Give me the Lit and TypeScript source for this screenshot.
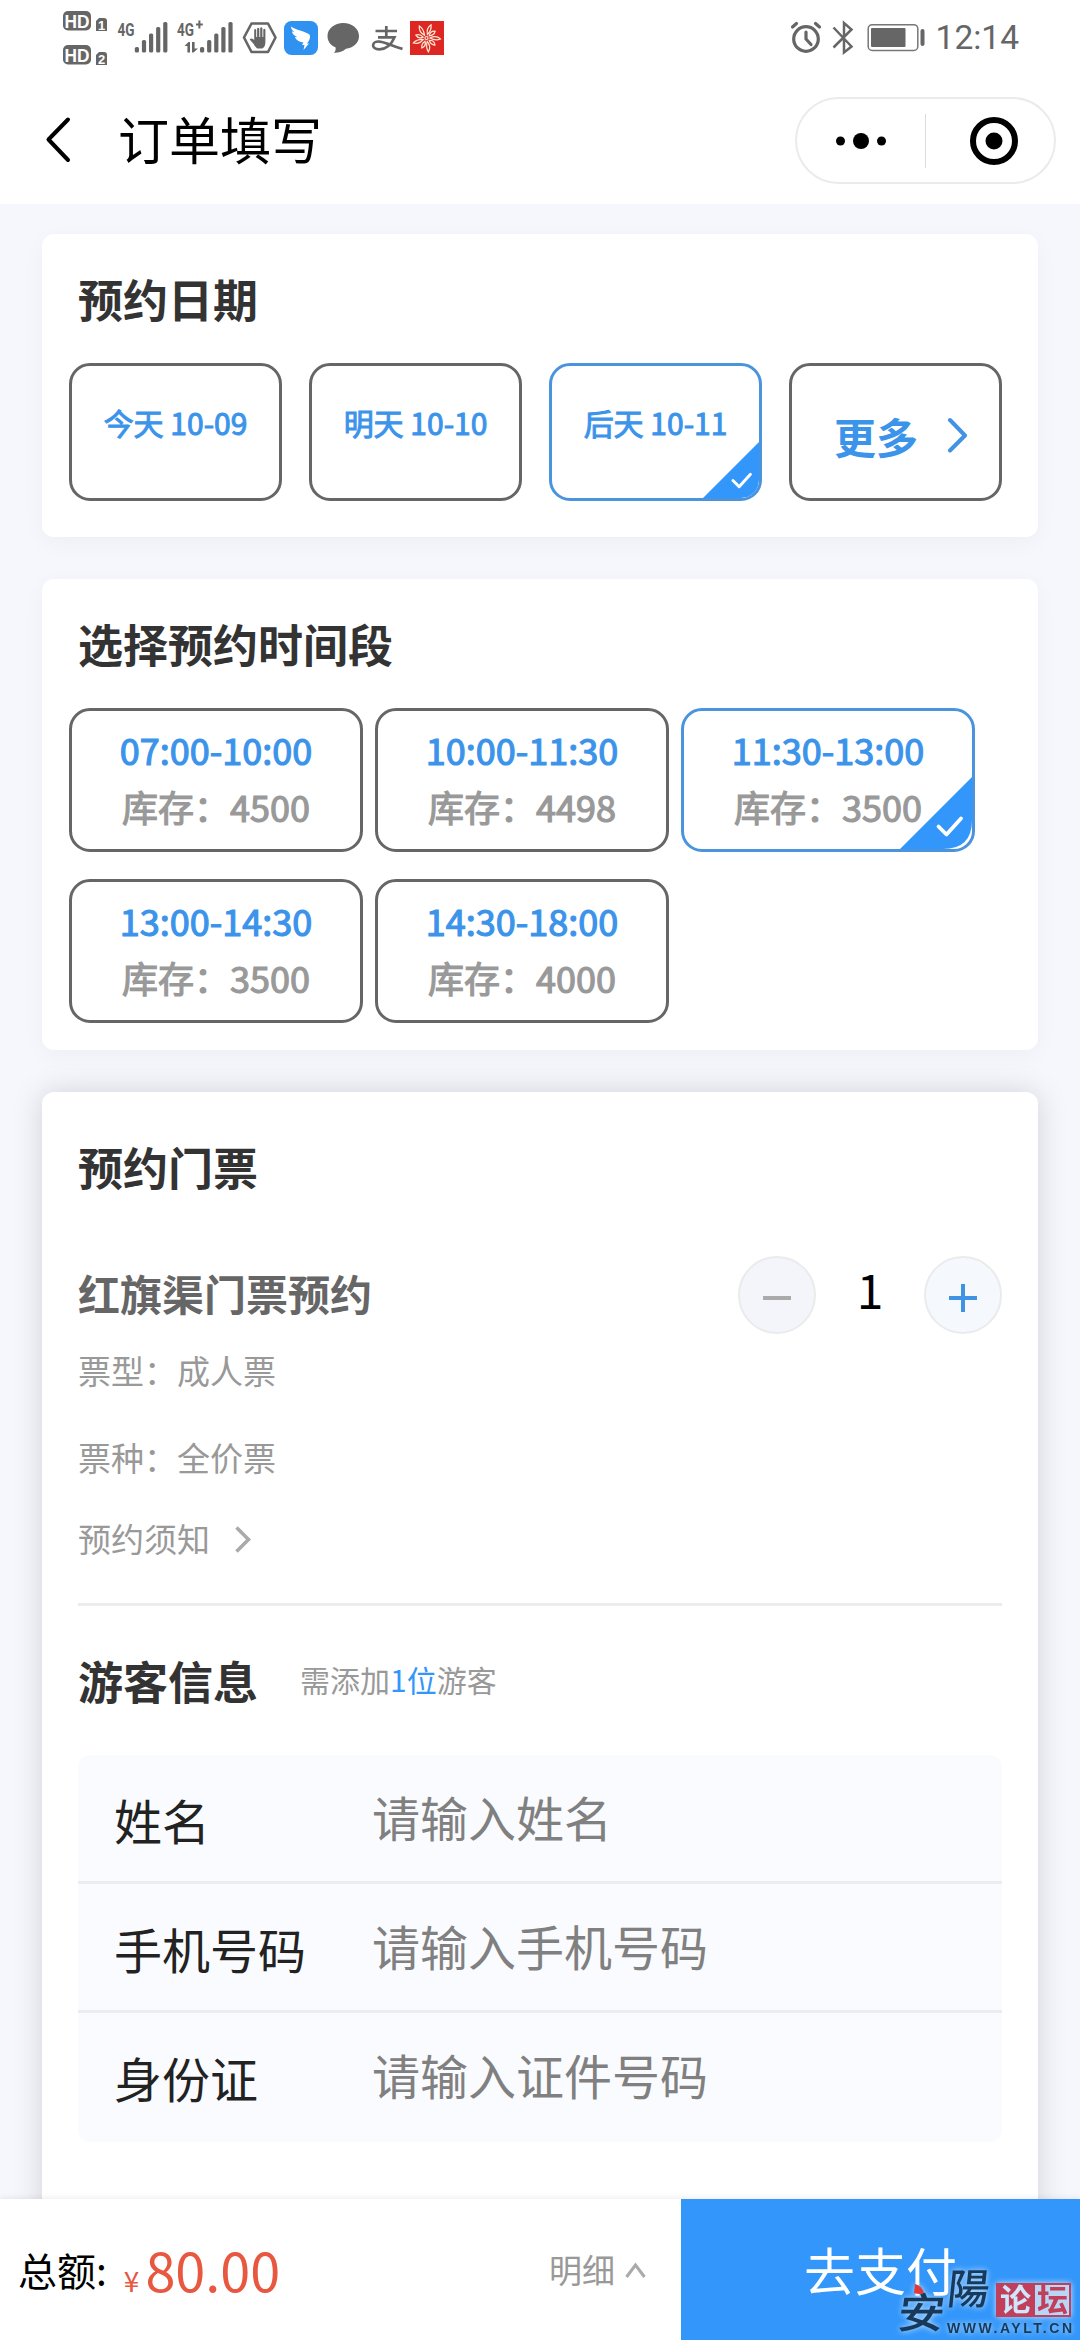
import { LitElement, html, css, svg } from "lit";
import { customElement, property, state } from "lit/decorators.js";
import { classMap } from "lit/directives/class-map.js";

interface Slot {
  time: string;
  stock: number;
}

const DAYS = ["今天 10-09", "明天 10-10", "后天 10-11"];

const SLOTS: Slot[] = [
  { time: "07:00-10:00", stock: 4500 },
  { time: "10:00-11:30", stock: 4498 },
  { time: "11:30-13:00", stock: 3500 },
  { time: "13:00-14:30", stock: 3500 },
  { time: "14:30-18:00", stock: 4000 },
];

const FIELDS = [
  { label: "姓名", hint: "请输入姓名" },
  { label: "手机号码", hint: "请输入手机号码" },
  { label: "身份证", hint: "请输入证件号码" },
];

const bars = (x: number) =>
  [47, 40, 33.5, 27, 22].map(
    (y, i) => svg`<rect x=${x + i * 7.1} y=${y} width="4.2" height=${52.5 - y} rx="1.6" />`
  );

@customElement("status-bar")
export class StatusBar extends LitElement {
  static styles = css`
    :host {
      display: flex;
      align-items: flex-start;
      height: 76px;
      padding: 0 61px 0 60px;
    }
    svg {
      display: block;
      flex: none;
      fill: #666;
    }
    .hd {
      font: 700 19px "Liberation Sans", sans-serif;
      fill: #fff;
    }
    .sim {
      font: 700 13px "Liberation Sans", sans-serif;
      fill: #fff;
    }
    .net {
      font: 700 18px "Roboto", sans-serif;
    }
    .spacer {
      flex: 1;
    }
    .clock {
      font: 400 33.500px/76px "Roboto", sans-serif;
      color: #666;
      margin-left: 10px;
    }
  `;

  render() {
    return html`
      <svg width="177" height="76" viewBox="60 0 177 76">
        <rect x="63" y="11" width="28" height="19.500" rx="5" />
        <text class="hd" x="64.500" y="27.500" textLength="25" lengthAdjust="spacingAndGlyphs">HD</text>
        <path d="M96 21l3-3h5q3 0 3 3v10H96z" />
        <text class="sim" x="98" y="29.500">1</text>
        <rect x="63" y="45" width="28" height="19.500" rx="5" />
        <text class="hd" x="64.500" y="61.500" textLength="25" lengthAdjust="spacingAndGlyphs">HD</text>
        <path d="M96 55l3-3h5q3 0 3 3v10H96z" />
        <text class="sim" x="98" y="63.500">2</text>
        <text class="net" x="117.500" y="35.500" textLength="17" lengthAdjust="spacingAndGlyphs">4G</text>
        ${bars(134.8)}
        <text class="net" x="177" y="35.500" textLength="17" lengthAdjust="spacingAndGlyphs">4G</text>
        <path d="M196 23.500h2.400v-3h2v3h2.400v2h-2.400v3h-2v-3H196z" />
        <path d="M184.500 46l4-4h1.500v10.500h-2.600V46zM192 42h2.600v6.500h3.400l-4.500 4H192z" />
        ${bars(200)}
      </svg>
      <svg width="44" height="76" viewBox="237 0 44 76">
        <path d="M251.500 23.500h16.500l7.500 14-7.500 14.500h-16.500l-7.500-14.500z" fill="none" stroke="#666" stroke-width="2.600" stroke-linejoin="round" />
        <path d="M254.200 29.500q1.200-1 2 0V37h.9v-8.500q1.100-1.500 2.200 0V37h.9v-9q1.200-1.400 2.200 0v9h.9v-7.500q1.100-1.300 2.100 0V42q0 5-3.200 6.500h-5q-2-1.500-3.500-4.500l-4-4.500q1.500-1.800 3.600-.3l.9.800z" />
      </svg>
      <svg width="42" height="76" viewBox="281 0 42 76">
        <rect x="284" y="21" width="34" height="34" rx="7.500" fill="#2f91f0" />
        <path fill="#fff" d="M291 26.500c5 3.500 13 4.500 18.500 8 1.500 3-.5 6.500-2.500 9h2l-5.500 6.500 1-5h-2.500l1.500-2.500c-4.500-.5-8-3-8.500-5.500l2.500.3c-3.500-1.600-5.500-3.500-5.500-6l2.300.9c-2-1.700-3.400-3.700-3.300-5.700z" />
      </svg>
      <svg width="42" height="76" viewBox="323 0 42 76">
        <path d="M343.300 23c8.800 0 15.700 5.600 15.700 13s-6 11.800-13 12.800c-3 2.600-7.500 4.200-12 4 1.500-1.500 2-3.500 1.500-5.500-5-2-8-6-8-11.300 0-7.400 7-13 15.800-13z" />
      </svg>
      <svg width="42" height="76" viewBox="365 0 42 76">
        <path d="M375.500 31h21.500M386.300 26v11M378 37.300h16.500c-3 7-8.500 12-15 12-9.500 0-7.500-8.500 0-7.700 7 .7 14 5 23 7.300" fill="none" stroke="#666" stroke-width="2.700" />
      </svg>
      <svg width="40" height="76" viewBox="407 0 40 76">
        <rect x="410" y="21" width="34" height="34" fill="#dd2722" />
        <g fill="none" stroke="#ffe9d6" stroke-width="1.200">
          ${[15, 52, 90, 130, 168, 205, 245, 285, 325].map(
            (a, i) => svg`<path d=${i % 2 ? "M426.500 34.500q-3.500-4 0-7.500 2.500 3.500 0 7.500z" : "M426.500 34.500q-3-6 1-10.500 2 5-1 10.500z"} transform=${`rotate(${a} 426.500 38)`} />`
          )}
          <circle cx="426.500" cy="38" r="1.500" />
        </g>
      </svg>
      <span class="spacer"></span>
      <svg width="36" height="76" viewBox="790 0 36 76">
        <g fill="none" stroke="#666" stroke-width="3.200" stroke-linecap="round">
          <circle cx="806" cy="39" r="12.300" />
          <path d="M806 32v7l5 5.500M792.500 27l4-3.500M819.500 27l-4-3.500" />
        </g>
      </svg>
      <svg width="36" height="76" viewBox="826 0 36 76">
        <path d="M833.500 27.500L851.500 46.500 844 52.500V23l7.500 6.500L833.500 47.500" fill="none" stroke="#666" stroke-width="2.500" />
      </svg>
      <svg width="64" height="76" viewBox="862 0 64 76">
        <rect x="868.200" y="24.700" width="49.600" height="25.800" rx="4" fill="none" stroke="#777" stroke-width="1.500" />
        <rect x="871" y="28" width="34.500" height="19" rx="1" />
        <rect x="920.500" y="29" width="4" height="17" rx="2" />
      </svg>
      <span class="clock">12:14</span>
    `;
  }
}

@customElement("choice-mark")
export class ChoiceMark extends LitElement {
  @property({ type: Number }) size = 60;
  @property({ type: Number }) corner = 23;

  static styles = css`
    :host {
      position: absolute;
      right: 0;
      bottom: 0;
      line-height: 0;
    }
    svg {
      display: block;
    }
  `;

  render() {
    const k = 72 - this.corner;
    return html`
      <svg width=${this.size} height=${this.size} viewBox="0 0 72 72">
        <path d=${`M72 0V${k}Q72 72 ${k} 72H0z`} fill="#3296fa" />
        <path d="M38.500 49.500l8 8 14.500-16" fill="none" stroke="#fff" stroke-width="3.800" stroke-linecap="round" stroke-linejoin="round" />
      </svg>
    `;
  }
}

@customElement("app-root")
export class AppRoot extends LitElement {
  @state() private day = 2;
  @state() private slotIndex = 2;

  static styles = css`
    :host {
      display: flex;
      flex-direction: column;
      position: relative;
      width: 1080px;
      height: 2340px;
      overflow: hidden;
      background: #f6f7fc;
      font-family: "Noto Sans CJK SC", sans-serif;
      color: #000;
    }
    * {
      box-sizing: border-box;
    }
    svg {
      display: block;
      flex: none;
    }
    .top {
      flex: none;
      height: 204px;
      background: #fff;
    }
    .nav {
      display: flex;
      align-items: flex-start;
      height: 128px;
      padding: 0 24px 0 40px;
    }
    .nav-title {
      flex: 1;
      margin: 0 0 0 38px;
      font-size: 51px;
      font-weight: 400;
      line-height: 124px;
    }
    .capsule {
      display: flex;
      align-items: center;
      width: 261px;
      height: 87px;
      margin-top: 21px;
      border: 2px solid #ebebeb;
      border-radius: 44px;
    }
    .capsule .part {
      display: flex;
      flex: none;
      width: 128px;
      justify-content: center;
    }
    .capsule .part.close {
      padding-left: 8px;
    }
    .capsule .rule {
      width: 1px;
      height: 54px;
      background: #dcdcdc;
    }
    .content {
      flex: 1;
      min-height: 0;
      display: flex;
      flex-direction: column;
      gap: 42px;
      padding: 30px 42px 0;
      overflow: hidden;
    }
    .card {
      flex: none;
      padding: 0 27px 36px;
      border-radius: 12px;
      background: #fff;
      box-shadow: 0 6px 24px rgba(0, 0, 0, 0.035);
    }
    .card.slots {
      padding-bottom: 27px;
    }
    .card.ticket {
      height: 1200px;
      padding: 0 36px;
      box-shadow: 0 0 30px rgba(0, 0, 0, 0.15);
    }
    .title {
      margin: 0;
      padding-left: 9px;
      font-size: 45px;
      font-weight: 700;
      line-height: 129px;
      color: #333;
    }
    .ticket .title {
      padding-left: 0;
      line-height: 149px;
    }
    .row {
      display: flex;
      gap: 27px;
    }
    .grid {
      display: grid;
      grid-template-columns: repeat(3, 294px);
      gap: 27px 12px;
    }
    .choice {
      position: relative;
      display: flex;
      flex-direction: column;
      align-items: center;
      height: 144px;
      padding-top: 10px;
      overflow: hidden;
      border: 3px solid #666;
      border-radius: 21px;
      font-size: 36px;
      line-height: 57px;
      color: #3c94ea;
      white-space: nowrap;
      -webkit-text-stroke: 1.2px currentColor;
    }
    .choice.day {
      width: 213px;
      height: 138px;
      padding-top: 0;
      font-size: 30px;
      line-height: 113px;
      -webkit-text-stroke-width: 1px;
    }
    .choice.on {
      border-color: #4a94dd;
    }
    .choice.more {
      flex-direction: row;
      align-items: center;
      justify-content: center;
      gap: 29px;
      padding: 6px 0 0 11px;
      font-size: 42px;
      font-weight: 700;
      line-height: 121px;
      -webkit-text-stroke-width: 0;
    }
    .stock {
      color: #999;
    }
    .buy {
      display: flex;
      align-items: flex-start;
      padding-top: 15px;
    }
    .name {
      flex: 1;
      font-size: 42px;
      font-weight: 700;
      line-height: 74px;
      color: #666;
    }
    .step {
      display: flex;
      align-items: center;
      justify-content: center;
      width: 78px;
      height: 78px;
      padding-top: 6px;
      border: 2px solid #eaebec;
      border-radius: 50%;
      background: #f4f5fa;
    }
    .step.plus {
      background: #f5f9fe;
    }
    .count {
      width: 108px;
      font-size: 48px;
      line-height: 65px;
      text-align: center;
    }
    .meta {
      font-size: 33px;
      line-height: 72px;
      color: #999;
    }
    .meta.kind {
      line-height: 103px;
    }
    .meta.notice {
      display: flex;
      align-items: center;
      gap: 24px;
      line-height: 58px;
    }
    .divider {
      height: 3px;
      margin-top: 36px;
      background: #ededed;
    }
    .guests {
      display: flex;
      align-items: flex-start;
      gap: 42px;
    }
    .guests .title {
      line-height: 149px;
    }
    .need {
      font-size: 30px;
      line-height: 147px;
      color: #999;
    }
    .need b {
      font-weight: 400;
      color: #3296fa;
    }
    .form {
      border-radius: 12px;
      background: #fafbfe;
    }
    .field {
      display: flex;
      align-items: flex-start;
      height: 129px;
      padding-left: 36px;
      border-bottom: 3px solid #ecedef;
      font-size: 48px;
      line-height: 128px;
      color: #222;
    }
    .field:last-child {
      border-bottom: 0;
    }
    .label {
      width: 258px;
    }
    .hint {
      line-height: 123px;
      color: #808080;
    }
    .footer {
      position: relative;
      display: flex;
      flex: none;
      align-items: center;
      height: 141px;
      padding-left: 18px;
      background: #fff;
      box-shadow: 0 -1px 6px rgba(0, 0, 0, 0.08);
      line-height: 141px;
    }
    .sum {
      font-size: 39px;
    }
    .price {
      display: flex;
      flex: 1;
      align-items: baseline;
      gap: 6px;
      height: 141px;
      margin-left: 17px;
      font-size: 54px;
      line-height: 136px;
      color: #e8573f;
    }
    .price .amount {
      line-height: 140px;
    }
    .price small {
      font-size: 28px;
    }
    .detail {
      display: flex;
      align-items: center;
      gap: 10px;
      margin-right: 35px;
      font-size: 33px;
      color: #999;
    }
    .pay {
      width: 399px;
      background: #3296fa;
      font-size: 51px;
      text-align: center;
      color: #fff;
    }
    .stamp {
      position: absolute;
      right: 0;
      bottom: 0;
      filter: drop-shadow(0 0 3px rgba(220, 240, 255, 0.9));
    }
    .brush {
      font-family: "Noto Sans CJK TC", sans-serif;
      font-weight: 500;
      fill: #173a5c;
    }
    .site {
      font: 700 14px "Liberation Sans", sans-serif;
      fill: #173a5c;
    }
    .seal {
      font-family: "Noto Sans CJK SC", sans-serif;
      font-size: 31px;
      font-weight: 700;
    }
  `;

  private renderDay(label: string, i: number) {
    const on = i === this.day;
    return html`
      <div class=${classMap({ choice: true, day: true, on })} @click=${() => (this.day = i)}>
        <span>${label}</span>
        ${on ? html`<choice-mark .size=${56}></choice-mark>` : ""}
      </div>
    `;
  }

  private renderSlot(slot: Slot, i: number) {
    const on = i === this.slotIndex;
    return html`
      <div class=${classMap({ choice: true, on })} @click=${() => (this.slotIndex = i)}>
        <span>${slot.time}</span>
        <span class="stock">库存：${slot.stock}</span>
        ${on ? html`<choice-mark .size=${72} .corner=${29}></choice-mark>` : ""}
      </div>
    `;
  }

  render() {
    return html`
      <header class="top">
        <status-bar></status-bar>
        <div class="nav">
          <svg width="40" height="128" viewBox="0 0 40 128">
            <path d="M28 43.500L8.500 63.500 28 84" fill="none" stroke="#000" stroke-width="4" stroke-linecap="round" stroke-linejoin="round" />
          </svg>
          <h1 class="nav-title">订单填写</h1>
          <div class="capsule">
            <span class="part">
              <svg width="52" height="18" viewBox="0 0 52 18">
                <circle cx="5.500" cy="9" r="4.500" />
                <circle cx="26" cy="9" r="8" />
                <circle cx="46.500" cy="9" r="4.500" />
              </svg>
            </span>
            <span class="rule"></span>
            <span class="part close">
              <svg width="50" height="50" viewBox="0 0 50 50">
                <circle cx="25" cy="25" r="21" fill="none" stroke="#000" stroke-width="6" />
                <circle cx="25" cy="25" r="8.500" />
              </svg>
            </span>
          </div>
        </div>
      </header>

      <main class="content">
        <section class="card">
          <h2 class="title">预约日期</h2>
          <div class="row">
            ${DAYS.map((d, i) => this.renderDay(d, i))}
            <div class="choice day more">
              <span>更多</span>
              <svg width="21" height="36" viewBox="0 0 21 36">
                <path d="M3 3l15 15.500L3 33.500" fill="none" stroke="#4293e3" stroke-width="4" stroke-linecap="round" stroke-linejoin="round" />
              </svg>
            </div>
          </div>
        </section>

        <section class="card slots">
          <h2 class="title">选择预约时间段</h2>
          <div class="grid">${SLOTS.map((s, i) => this.renderSlot(s, i))}</div>
        </section>

        <section class="card ticket">
          <h2 class="title">预约门票</h2>
          <div class="buy">
            <span class="name">红旗渠门票预约</span>
            <span class="step">
              <svg width="28" height="28" viewBox="0 0 28 28"><path d="M0 14h28" stroke="#aaa" stroke-width="4" /></svg>
            </span>
            <span class="count">1</span>
            <span class="step plus">
              <svg width="28" height="28" viewBox="0 0 28 28"><path d="M0 14h28M14 0v28" stroke="#3f92e4" stroke-width="4" /></svg>
            </span>
          </div>
          <div class="meta">票型：成人票</div>
          <div class="meta kind">票种：全价票</div>
          <div class="meta notice">
            <span>预约须知</span>
            <svg width="18" height="30" viewBox="0 0 18 30">
              <path d="M2.500 4.500l12 12-12 12" fill="none" stroke="#aaa" stroke-width="3.600" />
            </svg>
          </div>
          <div class="divider"></div>
          <div class="guests">
            <h2 class="title">游客信息</h2>
            <span class="need">需添加<b>1位</b>游客</span>
          </div>
          <div class="form">
            ${FIELDS.map(
              (f) => html`
                <div class="field">
                  <span class="label">${f.label}</span>
                  <span class="hint">${f.hint}</span>
                </div>
              `
            )}
          </div>
        </section>
      </main>

      <footer class="footer">
        <span class="sum">总额:</span>
        <span class="price"><small>¥</small><span class="amount">80.00</span></span>
        <span class="detail">
          明细
          <svg width="21" height="18" viewBox="0 0 21 18">
            <path d="M1.500 16L10.500 4l9 12" fill="none" stroke="#aaa" stroke-width="3" />
          </svg>
        </span>
        <span class="pay">去支付</span>
      </footer>

      <svg class="stamp" width="200" height="110" viewBox="880 2230 200 110">
        <text class="brush" font-size="47" transform="translate(896 2328) skewX(-8) scale(1 .88)">安</text>
        <text class="brush" font-size="42" transform="translate(946 2304) skewX(-6)">陽</text>
        <path d="M915 2284q7 2 9 9-4 2-10 0z" fill="#e0393a" />
        <rect x="996" y="2283" width="75" height="34" fill="#c0405c" />
        <rect x="1035" y="2285" width="34" height="30" fill="#b9d7f5" />
        <text class="seal" x="1000" y="2311" fill="#cfe6fb">论</text>
        <text class="seal" x="1037" y="2311" fill="#c0405c">坛</text>
        <text class="site" x="947" y="2332.500" textLength="125">WWW.AYLT.CN</text>
      </svg>
    `;
  }
}
